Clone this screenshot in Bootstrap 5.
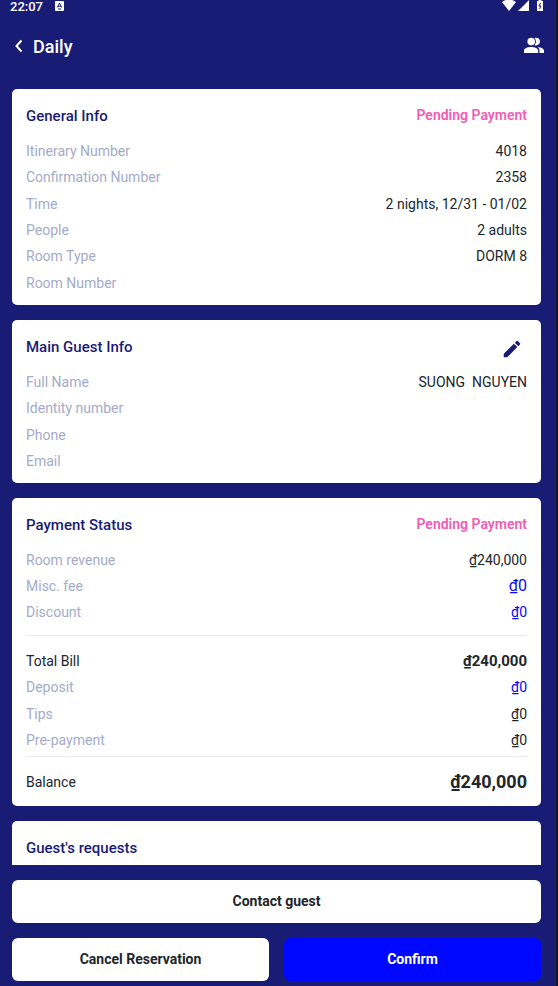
<!DOCTYPE html>
<html lang="en">
<head>
<meta charset="utf-8">
<meta name="viewport" content="width=device-width, initial-scale=1">
<title>Daily</title>
<link href="https://cdn.jsdelivr.net/npm/bootstrap@5.3.0/dist/css/bootstrap.min.css" rel="stylesheet">
<style>
body{background:#191c75;color:#20262c;font:400 14px/26px Roboto,Inter,"Noto Sans",sans-serif}
.screen{height:100vh;border-right:2px solid #14151f}
.phone-status{height:14px;padding:0 12px 0 10px;font:500 13px/13px Roboto,sans-serif}
.phone-status svg,.topbar svg,.edit svg{display:block}
.topbar{height:60px;padding:3px 10px 0 12px}
.topbar h1{font-size:18px;line-height:26px;font-weight:500;padding-top:3px}
.content-area{padding:15px 15px 0 12px;overflow:hidden}
.panel{border:0;border-radius:5px;padding:14px 14px 9px;margin-bottom:15px;color:inherit}
.panel-head{height:35px}
.panel-head h2{font-size:15px;line-height:26px;font-weight:500;color:#191c75}
.pending{color:#f25cb4;font-weight:600;line-height:24px;font-size:14px}
.rows{display:grid;grid-auto-rows:1fr}
.rows>div{display:flex;justify-content:space-between;align-items:center}
.rows dt{font-size:14px;font-weight:400;color:#a4abc8}
.rows .strong-label{color:#20262c}
.rows dd{margin:0;white-space:pre}
.rows-3{height:78px}.rows-4{height:105px}.rows-6{height:158px}
.balance-row{padding-bottom:2px}
.blue{color:#0808f5}
.mid{font-size:16px}
.sum{font-size:15px;font-weight:700}
.balance{font-size:18px;font-weight:700}
.rule{border:0;border-top:1px solid #e9eaee;opacity:1;margin:10px 0 12px}
.rule.tight{margin-top:3px}
.edit{padding:4px;color:#191c75}
.actions{padding:15px 15px 5px 12px;gap:15px}
.pair{gap:15px}
.action{height:43px;border-radius:6px;border:0;font-size:14px;font-weight:700;background:#fff;color:#20262c;flex:1 1 0}
.action.confirm{background:#0007ff;color:#fff}
.action:hover{background:#eef;color:#20262c}
</style>
</head>
<body>
<div class="screen d-flex flex-column">
  <div class="phone-status d-flex justify-content-between text-white flex-shrink-0">
    <div class="d-flex gap-2"><span class="me-1">22:07</span>
      <svg width="9" height="11" viewBox="0 0 9 11" aria-hidden="true"><rect y="1" width="9" height="10" rx="1" fill="#fff"/><path d="M2.300 7.500 4.500 3l2.200 4.500M3 6.300h3M3 9h3" fill="none" stroke="#191c75"/></svg>
    </div>
    <svg width="42" height="12" viewBox="0 0 42 12" aria-hidden="true"><path fill="#fff" d="M0 2Q7-3 14 2L7 11zM27 0v11H16zM35 1h1.500V0h3v1H41v10h-6z"/><path d="M38.600 3 37 6h2l-1.500 3" fill="none" stroke="#191c75"/></svg>
  </div>
  <header class="topbar d-flex align-items-center justify-content-between text-white flex-shrink-0">
    <div class="d-flex align-items-center">
      <button class="btn p-0 border-0 text-white me-2" type="button" aria-label="Back"><svg width="13" height="18" viewBox="0 0 13 18"><path d="M9.500 3.500 4.500 9l5 5.500" fill="none" stroke="#fff" stroke-width="2"/></svg></button>
      <h1 class="mb-0">Daily</h1>
    </div>
    <button class="btn p-0 border-0 text-white" type="button" aria-label="Guests"><svg width="24" height="24" viewBox="0 0 24 24"><path fill="#fff" d="M12.500 11.200c.9-1 1.400-2.100 1.400-3.600s-.5-2.600-1.400-3.600c2.900-.9 5.500.8 5.500 3.600s-2.600 4.500-5.500 3.600zM17.500 19v-2.200c0-1.600-.7-2.800-1.800-3.700 3.500.4 6.300 1.500 6.300 3.700V19zM2 16.800c0-5 14.200-5 14.200 0V19H2z"/><circle cx="9.200" cy="7.600" r="3.800" fill="#fff"/></svg></button>
  </header>
  <main class="content-area flex-grow-1">
    <section class="card panel">
      <div class="panel-head d-flex justify-content-between align-items-start"><h2 class="m-0">General Info</h2><span class="pending">Pending Payment</span></div>
      <dl class="rows rows-6 m-0">
        <div><dt>Itinerary Number</dt><dd>4018</dd></div>
        <div><dt>Confirmation Number</dt><dd>2358</dd></div>
        <div><dt>Time</dt><dd>2 nights, 12/31 - 01/02</dd></div>
        <div><dt>People</dt><dd>2 adults</dd></div>
        <div><dt>Room Type</dt><dd>DORM 8</dd></div>
        <div><dt>Room Number</dt><dd></dd></div>
      </dl>
    </section>
    <section class="card panel">
      <div class="panel-head d-flex justify-content-between align-items-start"><h2 class="m-0">Main Guest Info</h2>
        <button class="btn edit border-0" type="button" aria-label="Edit guest"><svg width="22" height="22" viewBox="0 0 24 24"><path fill="currentColor" d="M3 17.250V21h3.750L17.810 9.940l-3.750-3.750zM20.710 7.040a1 1 0 0 0 0-1.410l-2.340-2.340a1 1 0 0 0-1.410 0l-1.830 1.830 3.750 3.750z"/></svg></button></div>
      <dl class="rows rows-4 m-0">
        <div><dt>Full Name</dt><dd>SUONG  NGUYEN</dd></div>
        <div><dt>Identity number</dt><dd></dd></div>
        <div><dt>Phone</dt><dd></dd></div>
        <div><dt>Email</dt><dd></dd></div>
      </dl>
    </section>
    <section class="card panel">
      <div class="panel-head d-flex justify-content-between align-items-start"><h2 class="m-0">Payment Status</h2><span class="pending">Pending Payment</span></div>
      <dl class="rows rows-3 m-0">
        <div><dt>Room revenue</dt><dd>₫240,000</dd></div>
        <div><dt>Misc. fee</dt><dd class="blue mid">₫0</dd></div>
        <div><dt>Discount</dt><dd class="blue">₫0</dd></div>
      </dl>
      <hr class="rule">
      <dl class="rows rows-4 m-0">
        <div><dt class="strong-label">Total Bill</dt><dd class="sum">₫240,000</dd></div>
        <div><dt>Deposit</dt><dd class="blue">₫0</dd></div>
        <div><dt>Tips</dt><dd>₫0</dd></div>
        <div><dt>Pre-payment</dt><dd>₫0</dd></div>
      </dl>
      <hr class="rule tight">
      <dl class="rows balance-row m-0">
        <div><dt class="strong-label">Balance</dt><dd class="balance">₫240,000</dd></div>
      </dl>
    </section>
    <section class="card panel">
      <div class="panel-head"><h2 class="m-0">Guest's requests</h2></div>
    </section>
  </main>
  <footer class="actions d-flex flex-column flex-shrink-0">
    <div class="d-flex"><button class="btn action" type="button">Contact guest</button></div>
    <div class="pair d-flex"><button class="btn action" type="button">Cancel Reservation</button><button class="btn action confirm" type="button">Confirm</button></div>
  </footer>
</div>
<script src="https://cdn.jsdelivr.net/npm/bootstrap@5.3.0/dist/js/bootstrap.bundle.min.js"></script>
</body>
</html>
